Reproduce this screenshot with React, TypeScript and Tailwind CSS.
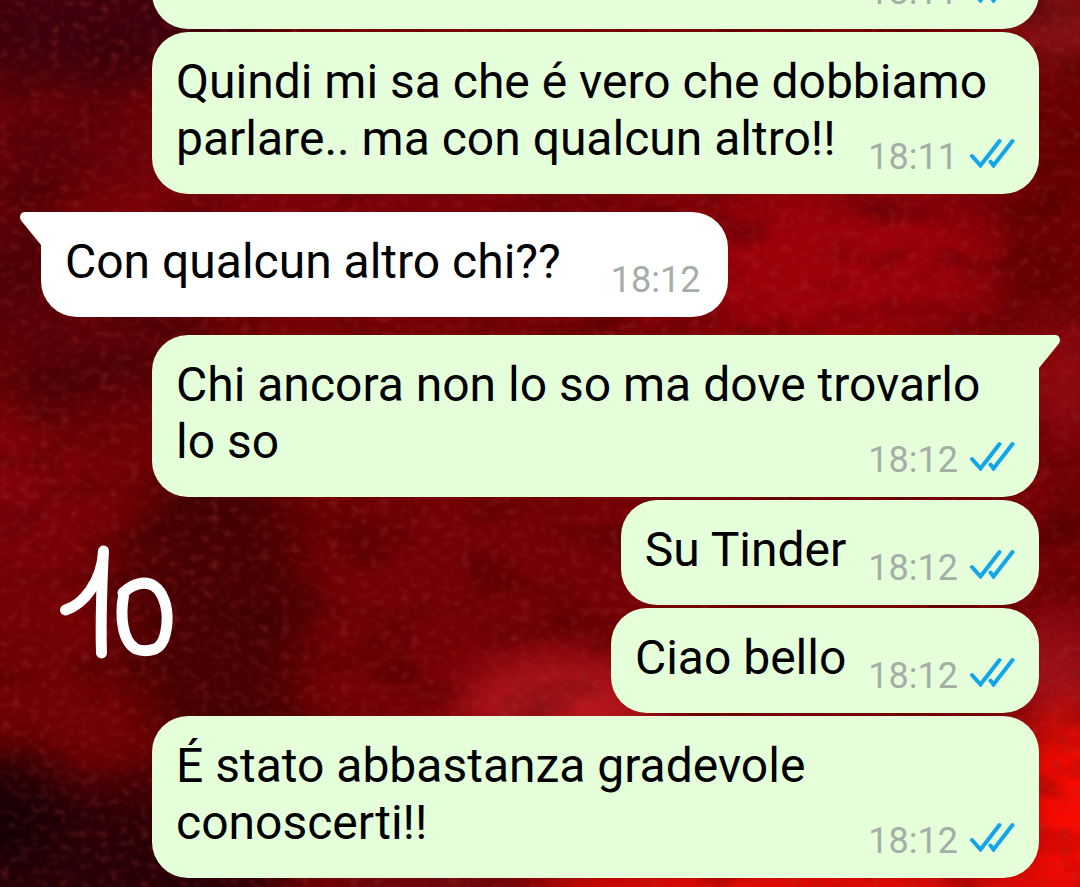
import { clsx } from "clsx";

type Message = {
  id: number;
  text: string;
  time: string;
  own: boolean;
  // first message of a group gets the tail
  tail?: boolean;
};

const MESSAGES: Message[] = [
  { id: 1, text: "", time: "18:11", own: true },
  { id: 2, text: "Quindi mi sa che é vero che dobbiamo parlare.. ma con qualcun altro!!", time: "18:11", own: true },
  { id: 3, text: "Con qualcun altro chi??", time: "18:12", own: false, tail: true },
  { id: 4, text: "Chi ancora non lo so ma dove trovarlo lo so", time: "18:12", own: true, tail: true },
  { id: 5, text: "Su Tinder", time: "18:12", own: true },
  { id: 6, text: "Ciao bello", time: "18:12", own: true },
  { id: 7, text: "É stato abbastanza gradevole conoscerti!!", time: "18:12", own: true },
];

const GLOWS = [
  { cx: 90, cy: 20, rx: 190, ry: 70, color: "#3e000b" },
  { cx: 60, cy: 150, rx: 120, ry: 40, color: "#62000a" },
  { cx: 350, cy: 200, rx: 260, ry: 40, color: "#7c0009" },
  { cx: 0, cy: 270, rx: 70, ry: 80, color: "#560008" },
  { cx: 110, cy: 360, rx: 110, ry: 60, color: "#580008" },
  { cx: 0, cy: 500, rx: 70, ry: 80, color: "#80000a" },
  { cx: 810, cy: 265, rx: 190, ry: 80, color: "#9c0008" },
  { cx: 1070, cy: 190, rx: 50, ry: 130, color: "#690000" },
  { cx: 1060, cy: 20, rx: 50, ry: 40, color: "#8a1418" },
  { cx: 1070, cy: 380, rx: 40, ry: 60, color: "#900a10" },
  { cx: 220, cy: 610, rx: 90, ry: 180, color: "#480003" },
  { cx: 50, cy: 680, rx: 90, ry: 50, color: "#700004" },
  { cx: 560, cy: 710, rx: 100, ry: 50, color: "#b8161c" },
  { cx: 1060, cy: 670, rx: 50, ry: 50, color: "#9c1018" },
  { cx: 1075, cy: 800, rx: 60, ry: 90, color: "#fc0a00" },
  { cx: 820, cy: 895, rx: 290, ry: 34, color: "#f80c04" },
  { cx: 430, cy: 890, rx: 90, ry: 24, color: "#6c0c12" },
  { cx: 80, cy: 860, rx: 220, ry: 80, color: "#280006" },
  { cx: 10, cy: 810, rx: 50, ry: 60, color: "#140004" },
];

function Wallpaper() {
  return (
    <svg
      className="absolute inset-0 h-full w-full"
      viewBox="0 0 1080 887"
      preserveAspectRatio="none"
      aria-hidden="true"
    >
      <defs>
        <filter id="soften" x="-50%" y="-50%" width="200%" height="200%" colorInterpolationFilters="sRGB">
          <feGaussianBlur stdDeviation="24" />
        </filter>
        <filter id="grain" x="0" y="0" width="100%" height="100%" colorInterpolationFilters="sRGB">
          <feTurbulence type="fractalNoise" baseFrequency="0.1 0.13" numOctaves="2" seed="7" />
          <feColorMatrix values="0 0 0 0 0.65  0 0 0 0 0.2  0 0 0 0 0.2  0.7 0.6 0 0 -0.64" />
          <feGaussianBlur stdDeviation="1" />
        </filter>
        <filter id="shade" x="0" y="0" width="100%" height="100%" colorInterpolationFilters="sRGB">
          <feTurbulence type="fractalNoise" baseFrequency="0.012 0.02" numOctaves="5" seed="3" />
          <feColorMatrix values="0 0 0 0 0.2  0 0 0 0 0  0 0 0 0 0.01  0 1 0 0 -0.45" />
        </filter>
      </defs>
      <rect width="1080" height="887" fill="#740005" />
      <g filter="url(#soften)">
        {GLOWS.map((g) => (
          <ellipse key={`${g.cx}-${g.cy}`} cx={g.cx} cy={g.cy} rx={g.rx} ry={g.ry} fill={g.color} />
        ))}
      </g>
      <rect width="1080" height="887" filter="url(#shade)" />
      <rect width="1080" height="887" filter="url(#grain)" />
    </svg>
  );
}

function ReadTicks() {
  return (
    <svg
      className="mt-0.5 h-[30px] w-12"
      viewBox="0 0 48 30"
      fill="none"
      stroke="#12a5ea"
      strokeWidth="4"
      role="img"
      aria-label="Letto"
    >
      <path d="M4 18 12.500 27.500 31.500 3" strokeLinecap="round" />
      <path d="M22.500 23.500 25.500 27.500 44.500 3" strokeLinecap="round" />
    </svg>
  );
}

function Tail({ own }: { own: boolean }) {
  return (
    <svg
      className={clsx("absolute top-0 h-[34px] w-[22px]", own ? "left-full -ml-px -scale-x-100" : "right-full -mr-px")}
      viewBox="0 0 22 34"
      fill="currentColor"
      aria-hidden="true"
    >
      <path d="M22 0H5C0.500 0-1.500 5 1.500 9L21 33H22Z" />
    </svg>
  );
}

function Bubble({ message }: { message: Message }) {
  const { text, time, own, tail } = message;
  return (
    <li
      className={clsx(
        "relative flow-root rounded-[36px] pt-[21px] pb-4 pl-6",
        own
          ? "ml-[111px] bg-[#e5ffdb] pr-[23px] text-[#e5ffdb]"
          : "mr-[111px] self-start bg-white pr-7 text-white",
        own && text && "self-end",
        tail && (own ? "rounded-tr-none" : "rounded-tl-none"),
        tail ? "mt-[18px]" : "mt-[3px]",
      )}
    >
      {tail && <Tail own={own} />}
      <span className="text-black">{text}</span>
      <span
        className={clsx(
          "float-right mt-[26px] flex items-start gap-[10px] text-4xl leading-[42px] text-[#a5aea6]",
          own ? "ml-[22px]" : "ml-[50px]",
        )}
      >
        <time>{time}</time>
        {own && <ReadTicks />}
      </span>
    </li>
  );
}

function Doodle() {
  return (
    <svg
      className="absolute top-[545px] left-[58px] h-[116px] w-[118px]"
      viewBox="58 545 118 116"
      fill="none"
      stroke="white"
      strokeWidth="11"
      strokeLinecap="round"
      strokeLinejoin="round"
      role="img"
      aria-label="10"
    >
      <path d="M65.500 610C82 605 102 583 103.500 551C102 575 100.500 625 101.500 653" />
      <path d="M123 593C132 584 145 580 154 586C163 592 168 607 167 622C166 637 162 646 155 649C149 651 141 651 136 649C122 641 120 616 123.500 596" />
    </svg>
  );
}

export default function App() {
  return (
    <main className="relative flex h-screen flex-col justify-end overflow-hidden bg-[#740005] font-[Roboto,sans-serif]">
      <Wallpaper />
      <ol className="relative flex flex-col px-[41px] pb-[9px] text-5xl leading-[57px]">
        {MESSAGES.map((message) => (
          <Bubble key={message.id} message={message} />
        ))}
      </ol>
      <Doodle />
    </main>
  );
}
